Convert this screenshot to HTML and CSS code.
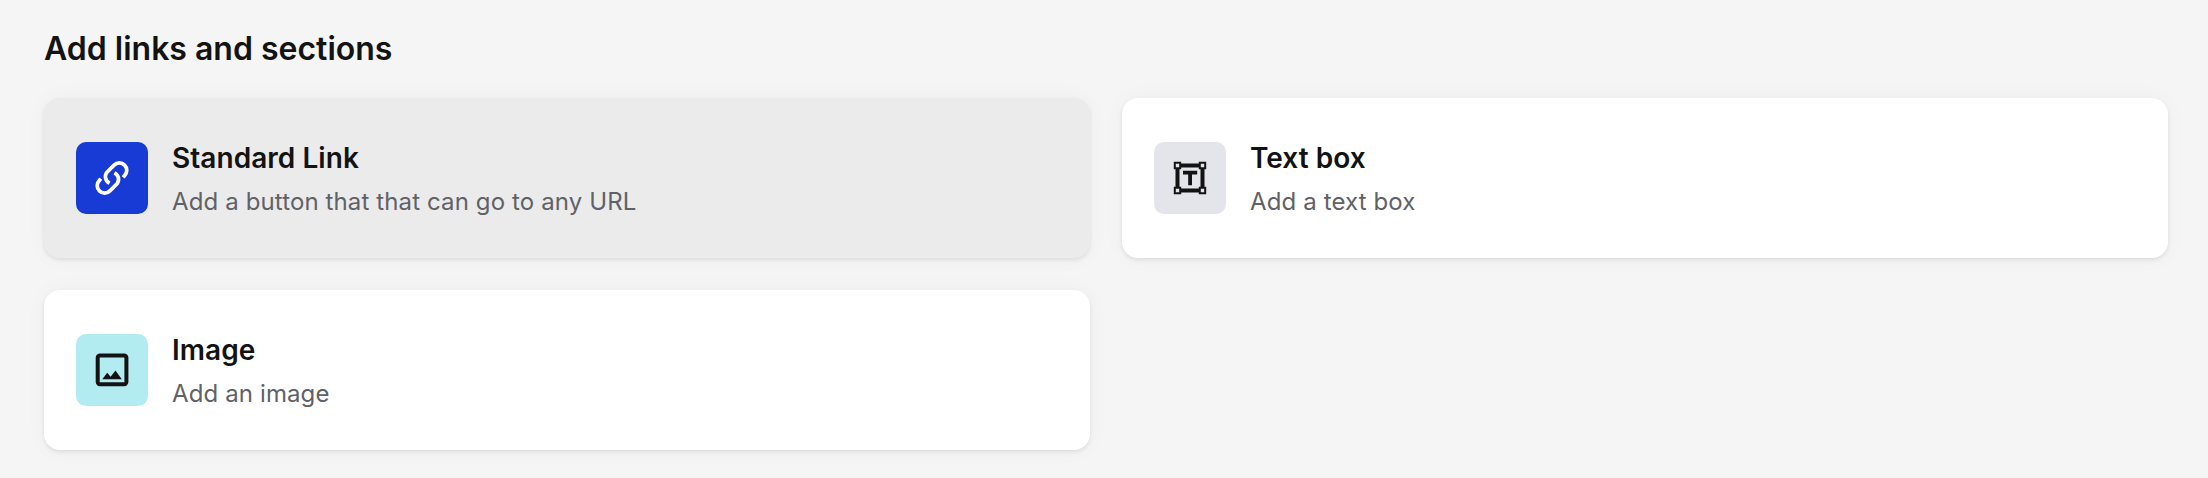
FILE: index.html
```
<!DOCTYPE html>
<html lang="en">
<head>
    <meta charset="UTF-8">
    <meta name="viewport" content="width=device-width, initial-scale=1.0">
    <title>Add links and sections</title>
    <link rel="stylesheet" href="styles.css">
</head>
<body>
    <main>
        <h1>Add links and sections</h1>
        <div class="cards">
            <div class="card active">
                <div class="icon icon-link">
                    <svg viewBox="0 0 40 40" fill="none" stroke="currentColor" stroke-width="3.7">
                        <path d="M17.6 25.2A7.3 7.3 0 0 1 14.8 14.4L22.1 7.1A7.3 7.3 0 0 1 32.6 17.6L31.2 19.4"/>
                        <path d="M22.4 14.8A7.3 7.3 0 0 1 25.2 25.6L17.9 32.9A7.3 7.3 0 0 1 7.4 22.4L8.8 20.6"/>
                    </svg>
                </div>
                <div class="card-text">
                    <h2>Standard Link</h2>
                    <p>Add a button that that can go to any URL</p>
                </div>
            </div>
            <div class="card">
                <div class="icon icon-text">
                    <svg viewBox="0 0 40 40" fill="none" stroke="currentColor">
                        <path stroke-width="4" d="M7.5 7.5h25v25h-25z"/>
                        <path stroke-width="3.8" d="M13 14.7h14.2M20.1 14.7V27.3"/>
                        <path class="handle" stroke-width="2" d="M4.8 4.8h5.4v5.4H4.8zM29.8 4.8h5.4v5.4h-5.4zM4.8 29.8h5.4v5.4H4.8zM29.8 29.8h5.4v5.4h-5.4z"/>
                    </svg>
                </div>
                <div class="card-text">
                    <h2>Text box</h2>
                    <p>Add a text box</p>
                </div>
            </div>
            <div class="card">
                <div class="icon icon-image">
                    <svg viewBox="0 0 40 40" fill="none" stroke="currentColor">
                        <rect x="5.7" y="5.5" width="28.7" height="28.7" rx="2.2" stroke-width="4"/>
                        <path fill="currentColor" stroke="none" d="M10.3 29.2l4.9-6.5 3.4 4 4.9-6.2 6.3 8.7z"/>
                    </svg>
                </div>
                <div class="card-text">
                    <h2>Image</h2>
                    <p>Add an image</p>
                </div>
            </div>
        </div>
    </main>
</body>
</html>
```
FILE: styles.css
```
body {
    margin: 0;
    font-family: Inter, sans-serif;
    background-color: #f5f5f5;
    color: #131313;
}
main {
    padding: 29px 40px 28px 44px;
}
h1, h2, p {
    margin: 0;
}
h1 {
    font-size: 32px;
    line-height: 40px;
    font-weight: 600;
    margin-bottom: 29px;
}
.cards {
    display: grid;
    grid-template-columns: 1fr 1fr;
    gap: 32px;
}
.card {
    display: flex;
    align-items: center;
    gap: 24px;
    height: 160px;
    padding: 0 32px;
    box-sizing: border-box;
    background-color: #ffffff;
    border-radius: 16px;
    box-shadow: 0 2px 4px rgba(0, 0, 0, 0.09), 0 0 24px rgba(0, 0, 0, 0.03);
}
.card.active {
    background-color: #ebebeb;
}
.icon {
    display: flex;
    align-items: center;
    justify-content: center;
    width: 72px;
    height: 72px;
    border-radius: 10px;
}
.icon svg {
    width: 40px;
    height: 40px;
}
.icon-link {
    background-color: #183bd6;
    color: #ffffff;
}
.icon-text {
    background-color: #e4e5ea;
}
.icon-text .handle {
    fill: #e4e5ea;
}
.icon-image {
    background-color: #b2ecf0;
}
.card-text {
    padding-top: 4px;
}
.card-text h2 {
    font-size: 28px;
    line-height: 40px;
    font-weight: 600;
    letter-spacing: 0.05px;
    margin-bottom: 4px;
}
.card-text p {
    font-size: 24px;
    line-height: 40px;
    letter-spacing: 0.12px;
    color: #606166;
}
```
